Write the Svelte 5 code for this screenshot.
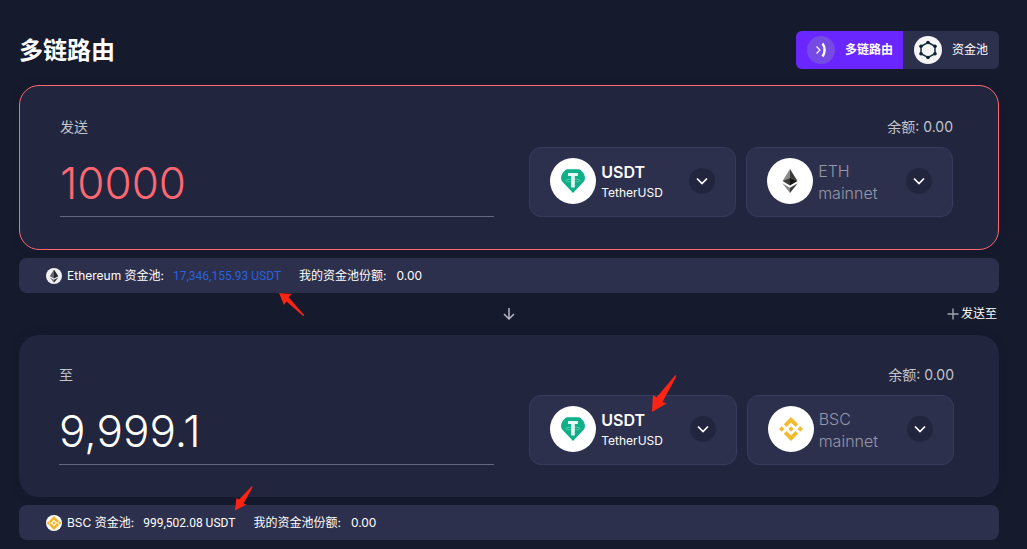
<script>
  const routes = $state([
    {
      id: 'from', label: '发送', amount: '10000', error: true,
      chain: 'ETH', icon: 'eth', pool: 'Ethereum',
      liquidity: '17,346,155.93 USDT', link: true
    },
    {
      id: 'to', label: '至', amount: '9,999.1', error: false,
      chain: 'BSC', icon: 'bsc', pool: 'BSC',
      liquidity: '999,502.08 USDT', link: false
    }
  ]);
</script>

{#snippet logo(name)}
  {#if name === 'usdt'}
    <svg class="logo" viewBox="0 0 46 46" aria-hidden="true">
      <circle cx="23" cy="23" r="23" fill="#fff" />
      <path d="M17.500 11.200h11c3 0 6.500 5.600 6.500 8.800 0 2.500-1.600 4-3 5.500L23 35l-9-9.500c-1.400-1.500-3-3-3-5.500 0-3.200 3.500-8.800 6.500-8.800z" fill="#0fb087" />
      <ellipse cx="23" cy="22.500" rx="7" ry="1.500" fill="none" stroke="#6fd0b6" stroke-width=".7" />
      <path d="M18 15h10v3h-3.200v11.500h-3.600V18H18z" fill="#e6faf4" />
    </svg>
  {:else if name === 'eth'}
    <svg class="logo" viewBox="0 0 46 46" aria-hidden="true">
      <circle cx="23" cy="23" r="23" fill="#fff" />
      <path d="M23 11v8.700L15.500 23z" fill="#8a8a8a" />
      <path d="M23 11v8.700l7.500 3.300z" fill="#3c3c3b" />
      <path d="M15.500 23l7.500-3.300v7.700z" fill="#3c3c3b" />
      <path d="M30.500 23L23 19.700v7.700z" fill="#141414" />
      <path d="M15.300 25.300L23 29.800V35z" fill="#8a8a8a" />
      <path d="M30.700 25.300L23 29.800V35z" fill="#3c3c3b" />
    </svg>
  {:else}
    <svg class="logo" viewBox="0 0 46 46" aria-hidden="true">
      <circle cx="23" cy="23" r="23" fill="#fff" />
      <g fill="#f3ba2f">
        <path d="M23 11l7.200 7.200-2.700 2.700L23 16.400l-4.500 4.500-2.700-2.700z" />
        <path d="M23 35l7.200-7.200-2.700-2.700L23 29.600l-4.500-4.500-2.700 2.700z" />
        <path d="M23 20.300l2.700 2.700-2.700 2.700-2.700-2.700z" />
        <path d="M13.700 20.300l2.700 2.700-2.700 2.700-2.700-2.700z" />
        <path d="M32.300 20.300l2.700 2.700-2.700 2.700-2.700-2.700z" />
      </g>
    </svg>
  {/if}
{/snippet}

{#snippet miniLogo(name)}
  {#if name === 'eth'}
    <svg class="mini" viewBox="0 0 16 16" aria-hidden="true">
      <circle cx="8" cy="8" r="8" fill="#f1f1f4" />
      <path d="M8 1.500L3.700 8.300 8 10.600z" fill="#66676d" />
      <path d="M8 1.500l4.300 6.800L8 10.600z" fill="#25262c" />
      <path d="M3.700 9.400L8 11.800v3z" fill="#77787e" />
      <path d="M12.300 9.400L8 11.800v3z" fill="#303138" />
    </svg>
  {:else}
    <svg class="mini" viewBox="0 0 16 16" aria-hidden="true">
      <circle cx="8" cy="8" r="8" fill="#fff" />
      <g fill="#f3b42c">
        <path d="M8 1l5 5-1.900 1.900L8 4.800 4.900 7.900 3 6z" />
        <path d="M8 15l5-5-1.900-1.900L8 11.200 4.900 8.100 3 10z" />
        <path d="M8 6.300L9.700 8 8 9.700 6.300 8zM2.300 6.300L4 8 2.300 9.700.6 8zM13.700 6.300L15.400 8l-1.700 1.700L12 8z" />
      </g>
    </svg>
  {/if}
{/snippet}

{#snippet chevron()}
  <svg class="chevron" viewBox="0 0 26 26" aria-hidden="true">
    <circle cx="13" cy="13" r="13" fill="#22253e" />
    <path d="M8 10.500l5 5 5-5" fill="none" stroke="#fff" stroke-width="1.700" />
  </svg>
{/snippet}

{#snippet panel(route)}
  <section class="panel" class:error={route.error}>
    <div class="captions">
      <label for={route.id}>{route.label}</label>
      <span>余额: 0.00</span>
    </div>
    <div class="fields">
      <input id={route.id} type="text" inputmode="decimal" bind:value={route.amount} />
      <div class="picker">
        <button class="select" type="button" aria-haspopup="listbox">
          {@render logo('usdt')}
          <span class="token"><strong>USDT</strong><small>TetherUSD</small></span>
          {@render chevron()}
        </button>
        {#if !route.error}
          <svg class="pointer token-pointer" viewBox="0 0 26 38" aria-hidden="true">
            <path d="M1 37L2 20l3.500 2.500L24 .5c1.500-.5 1.500.5 1 1.500L11.500 27l4 1.500z" />
          </svg>
        {/if}
      </div>
      <button class="select" type="button" aria-haspopup="listbox">
        {@render logo(route.icon)}
        <span class="chain">{route.chain}<br />mainnet</span>
        {@render chevron()}
      </button>
    </div>
  </section>
  <div class="pool">
    {@render miniLogo(route.icon)}
    <span class="pool-name">{route.pool} 资金池:</span>
    <span class="liquidity" class:link={route.link}>
      {route.liquidity}
      {#if route.link}
        <svg class="pointer link-pointer" viewBox="0 0 26 24" aria-hidden="true">
          <path d="M0 0l13 1-3.500 3L25 22c.5 1-.5 1.200-1.500.5L7.500 8.500 5 12z" />
        </svg>
      {:else}
        <svg class="pointer pool-pointer" viewBox="0 0 18 25" aria-hidden="true">
          <path d="M0 24.500L1.400 12l2.600 1.500L16.500.5c1-.5 1.200.3.800 1.200L8.600 17.500l3 1z" />
        </svg>
      {/if}
    </span>
    <span>我的资金池份额:</span>
    <span class="share">0.00</span>
  </div>
{/snippet}

<main>
  <header>
    <h1>多链路由</h1>
    <nav>
      <button class="tab active" type="button">
        <svg viewBox="0 0 28 28" aria-hidden="true">
          <circle cx="14" cy="14" r="14" fill="#754be4" />
          <path d="M9.500 10.500l3.500 3.500-3.500 3.500" fill="none" stroke="#fff" stroke-width="1.200" />
          <path d="M15.500 7.500c2.800 3.500 2.800 9.500 0 13" fill="none" stroke="#fff" stroke-width="2.400" />
        </svg>
        多链路由
      </button>
      <button class="tab" type="button">
        <svg viewBox="0 0 28 28" aria-hidden="true">
          <circle cx="14" cy="14" r="14" fill="#f5f5f5" />
          <path d="M14 6.500l7 3.800v7.400l-7 3.800-7-3.800v-7.400z" fill="none" stroke="#16303c" stroke-width="1.500" />
          <g fill="#0d2430">
            <circle cx="14" cy="6.500" r="1.800" /><circle cx="21" cy="10.300" r="1.800" />
            <circle cx="21" cy="17.700" r="1.800" /><circle cx="14" cy="21.500" r="1.800" />
            <circle cx="7" cy="17.700" r="1.800" /><circle cx="7" cy="10.300" r="1.800" />
          </g>
        </svg>
        资金池
      </button>
    </nav>
  </header>

  {@render panel(routes[0])}

  <div class="between">
    <button class="swap" type="button" aria-label="切换">
      <svg viewBox="0 0 12 12" aria-hidden="true">
        <path d="M6 0v11M1 6l5 5 5-5" fill="none" stroke="#b5b7c1" stroke-width="1.500" />
      </svg>
    </button>
    <button class="send-to" type="button">
      <svg viewBox="0 0 12 12" aria-hidden="true">
        <path d="M6 .5v11M.5 6h11" stroke="#a2a4ae" stroke-width="1.400" />
      </svg>
      发送至
    </button>
  </div>

  {@render panel(routes[1])}
</main>

<style>
  :global(body) {
    margin: 0;
    background: #161a2d;
  }
  main {
    padding: 31px 28px 9px 19px;
    color: #fff;
    font: 12px/16px Inter, "Noto Sans CJK SC", sans-serif;
  }
  button {
    margin: 0;
    padding: 0;
    border: 0;
    background: none;
    color: inherit;
    font: inherit;
    text-align: left;
    cursor: pointer;
  }
  svg {
    display: block;
    flex: none;
  }
  header {
    display: flex;
    justify-content: space-between;
    align-items: center;
    height: 38px;
    margin-bottom: 16px;
  }
  h1 {
    margin: 0;
    padding-top: 2px;
    font-size: 24px;
    line-height: 32px;
    font-weight: 700;
  }
  nav {
    display: flex;
    height: 38px;
    border-radius: 6px;
    overflow: hidden;
    background: #2d304d;
  }
  .tab {
    display: flex;
    align-items: center;
    gap: 10px;
    padding: 0 11px;
  }
  .tab.active {
    padding-right: 10px;
    background: #6a26ff;
    font-weight: 700;
  }
  .tab svg {
    width: 28px;
    height: 28px;
  }
  .panel {
    padding: 0 45px 32px 40px;
    border-radius: 20px;
    background: #22253e;
    box-shadow: 0 0 8px #12162a66;
  }
  .panel.error {
    padding-top: 1px;
    border: 1px solid #ff6871;
  }
  .captions {
    display: flex;
    justify-content: space-between;
    align-items: center;
    height: 28px;
    padding: 26px 0 6px;
    color: #c3c5ca;
    font-size: 14px;
  }
  .fields {
    display: grid;
    grid-template-columns: 2.22fr 1fr 1fr;
    gap: 10px;
  }
  input {
    box-sizing: border-box;
    min-width: 0;
    margin: 0 25px 0 0;
    padding: 2px 0 0;
    border: 0;
    border-bottom: 1px solid #636680;
    border-radius: 0;
    outline: 0;
    background: none;
    color: #fff;
    font: 300 44px/60px Inter, sans-serif;
  }
  .error input {
    color: #ff6871;
  }
  .picker {
    position: relative;
  }
  .select {
    box-sizing: border-box;
    display: flex;
    align-items: center;
    width: 100%;
    height: 70px;
    padding: 0 20px 2px;
    border: 1px solid #363b5d;
    border-radius: 12px;
    background: #2d304d;
  }
  .logo {
    width: 46px;
    height: 46px;
    margin-right: 5px;
  }
  .chevron {
    width: 26px;
    height: 26px;
    margin-left: auto;
  }
  .token,
  .chain {
    padding-top: 2px;
  }
  .token strong,
  .token small {
    display: block;
    font-size: 16px;
    line-height: 22px;
    font-weight: 600;
  }
  .token small {
    font-size: 12px;
    line-height: 20px;
    font-weight: 400;
  }
  .chain {
    color: #9597aa;
    font-size: 16px;
    line-height: 22px;
    font-weight: 300;
  }
  .pool {
    display: flex;
    align-items: center;
    height: 35px;
    margin-top: 8px;
    padding: 0 27px;
    border-radius: 8px;
    background: #2d304d;
    white-space: nowrap;
  }
  .mini {
    width: 16px;
    height: 16px;
    margin-right: 5px;
  }
  .liquidity {
    position: relative;
    margin: 0 18px 0 9px;
    font-family: Roboto, sans-serif;
  }
  .liquidity.link {
    color: #2862df;
  }
  .share {
    margin-left: 10px;
  }
  .between {
    display: grid;
    grid-template-columns: 1fr auto 1fr;
    align-items: center;
    height: 42px;
  }
  .swap {
    grid-column: 2;
  }
  .swap svg,
  .send-to svg {
    width: 12px;
    height: 12px;
  }
  .send-to {
    display: flex;
    align-items: center;
    justify-self: end;
    gap: 2px;
    padding-right: 2px;
  }
  .pointer {
    position: absolute;
    fill: #ff2314;
    pointer-events: none;
  }
  .link-pointer {
    right: -24px;
    top: 25px;
    width: 26px;
    height: 24px;
  }
  .token-pointer {
    left: 122px;
    top: -20px;
    width: 26px;
    height: 38px;
  }
  .pool-pointer {
    right: -18px;
    bottom: 20px;
    width: 18px;
    height: 25px;
  }
</style>
